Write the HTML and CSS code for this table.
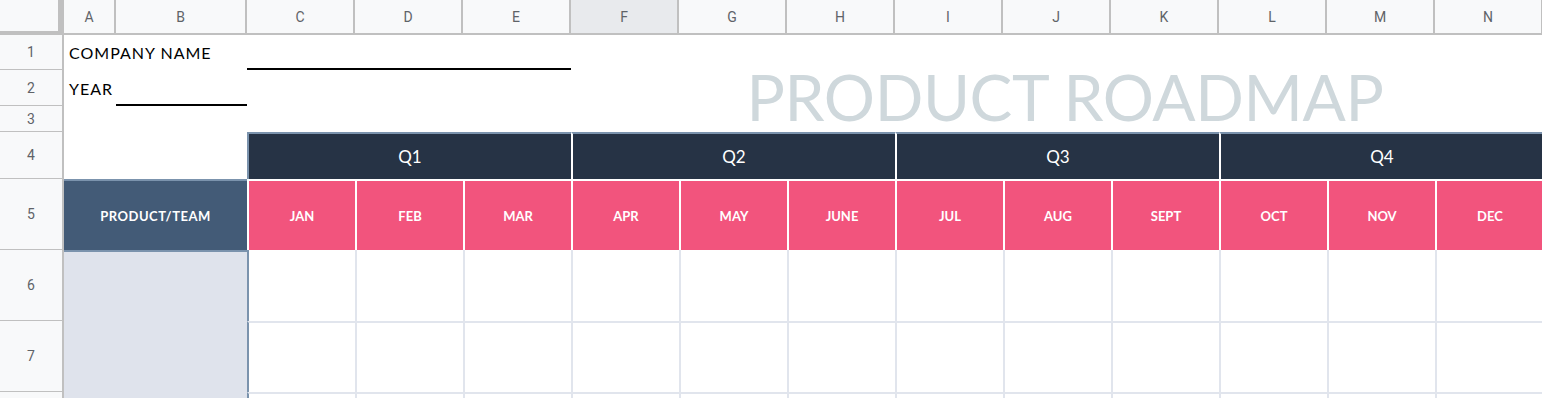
FILE: index.html
```html
<!DOCTYPE html>
<html lang="en">
<head>
    <meta charset="UTF-8">
    <meta name="viewport" content="width=device-width, initial-scale=1.0">
    <title>Product Roadmap</title>
    <link rel="stylesheet" href="styles.css">
</head>
<body>
    <div class="sheet">
        <!-- Column letters -->
        <div class="row">
            <div class="corner"></div>
            <div class="col-head">A</div>
            <div class="col-head">B</div>
            <div class="col-head">C</div>
            <div class="col-head">D</div>
            <div class="col-head">E</div>
            <div class="col-head active">F</div>
            <div class="col-head">G</div>
            <div class="col-head">H</div>
            <div class="col-head">I</div>
            <div class="col-head">J</div>
            <div class="col-head">K</div>
            <div class="col-head">L</div>
            <div class="col-head">M</div>
            <div class="col-head">N</div>
        </div>

        <!-- Company info -->
        <div class="row">
            <div class="row-head">1</div>
            <div class="cell label span-2">COMPANY NAME</div>
            <div class="cell underline span-3"></div>
        </div>
        <div class="row">
            <div class="row-head">2</div>
            <div class="cell label">YEAR</div>
            <div class="cell underline"></div>
            <div class="cell span-3"></div>
        </div>
        <div class="row">
            <div class="row-head">3</div>
            <div class="cell span-5"></div>
        </div>

        <div class="title">PRODUCT ROADMAP</div>

        <!-- Quarters -->
        <div class="row">
            <div class="row-head">4</div>
            <div class="cell span-2"></div>
            <div class="quarter first span-3">Q1</div>
            <div class="quarter span-3">Q2</div>
            <div class="quarter span-3">Q3</div>
            <div class="quarter span-3">Q4</div>
        </div>

        <!-- Months -->
        <div class="row">
            <div class="row-head">5</div>
            <div class="team-head span-2">PRODUCT/TEAM</div>
            <div class="month">JAN</div>
            <div class="month">FEB</div>
            <div class="month">MAR</div>
            <div class="month">APR</div>
            <div class="month">MAY</div>
            <div class="month">JUNE</div>
            <div class="month">JUL</div>
            <div class="month">AUG</div>
            <div class="month">SEPT</div>
            <div class="month">OCT</div>
            <div class="month">NOV</div>
            <div class="month">DEC</div>
        </div>

        <!-- Roadmap rows -->
        <div class="row first-body">
            <div class="row-head">6</div>
            <div class="team span-2"></div>
            <div class="slot start"></div>
            <div class="slot"></div><div class="slot"></div><div class="slot"></div>
            <div class="slot"></div><div class="slot"></div><div class="slot"></div>
            <div class="slot"></div><div class="slot"></div><div class="slot"></div>
            <div class="slot"></div><div class="slot"></div>
        </div>
        <div class="row">
            <div class="row-head">7</div>
            <div class="team span-2"></div>
            <div class="slot start"></div>
            <div class="slot"></div><div class="slot"></div><div class="slot"></div>
            <div class="slot"></div><div class="slot"></div><div class="slot"></div>
            <div class="slot"></div><div class="slot"></div><div class="slot"></div>
            <div class="slot"></div><div class="slot"></div>
        </div>
        <div class="row">
            <div class="row-head"></div>
            <div class="team span-2"></div>
            <div class="slot start"></div>
            <div class="slot"></div><div class="slot"></div><div class="slot"></div>
            <div class="slot"></div><div class="slot"></div><div class="slot"></div>
            <div class="slot"></div><div class="slot"></div><div class="slot"></div>
            <div class="slot"></div><div class="slot"></div>
        </div>
    </div>
</body>
</html>
```

FILE: styles.css
```css
/* Reset */
* {
    margin: 0;
    padding: 0;
    box-sizing: border-box;
}

body {
    font-family: 'Lato', 'Noto Sans', sans-serif;
    background-color: #fff;
    color: #000;
    overflow: hidden;
}

/* Sheet grid: row numbers, A, B, then twelve month columns */
.sheet {
    display: grid;
    grid-template-columns: 64px 52px 131px repeat(12, 108px);
    grid-template-rows: 35px 35px 36px 26px 47px 71px 71px 71px 71px;
}

.row {
    display: contents;
}

.span-2 { grid-column: span 2; }
.span-3 { grid-column: span 3; }
.span-5 { grid-column: span 5; }

/* Spreadsheet headers */
.corner {
    background-color: #f8f9fa;
    border-right: 6px solid #c0c0c0;
    border-bottom: 4px solid #c0c0c0;
}

.col-head,
.row-head {
    display: flex;
    justify-content: center;
    align-items: center;
    background-color: #f8f9fa;
    font-family: 'Roboto', 'Liberation Sans', sans-serif;
    font-size: 14px;
    color: #5f6368;
}

.col-head {
    border-right: 2px solid #c0c0c0;
    border-bottom: 2px solid #c0c0c0;
}

.col-head.active {
    background-color: #e8eaed;
}

.row-head {
    border-right: 2px solid #c0c0c0;
    border-bottom: 1px solid #c0c0c0;
}

/* Company info */
.cell {
    display: flex;
    align-items: center;
}

.label {
    padding-left: 5px;
    font-size: 16px;
    letter-spacing: 1px;
}

.underline {
    border-bottom: 2px solid #000;
}

.title {
    grid-column: 7 / 16;
    grid-row: 2 / 5;
    align-self: end;
    padding-bottom: 3px;
    padding-left: 16px;
    text-align: center;
    font-size: 64px;
    line-height: 64px;
    letter-spacing: -0.4px;
    color: #cfd8dc;
    white-space: nowrap;
}

/* Quarters and months */
.quarter {
    display: flex;
    justify-content: center;
    align-items: center;
    background-color: #263345;
    border-top: 2px solid #7b93ad;
    border-left: 2px solid #fff;
    color: #fff;
    font-size: 17px;
}

.quarter.first {
    border-left-color: #7b93ad;
}

.team-head,
.month {
    display: flex;
    justify-content: center;
    align-items: center;
    color: #fff;
    font-size: 13px;
    font-weight: 700;
}

.team-head {
    background-color: #435b77;
    border-top: 2px solid #7b93ad;
    letter-spacing: 0.5px;
}

.month {
    background-color: #f2547d;
    border-top: 2px solid #fff;
    border-left: 2px solid #fff;
}

/* Roadmap body */
.team {
    background-color: #dfe3ec;
}

.first-body .team {
    border-top: 2px solid #7b93ad;
}

.slot {
    border-top: 2px solid #e1e5ed;
    border-left: 2px solid #e1e5ed;
}

.first-body .slot {
    border-top: none;
}

.slot.start {
    border-left-color: #7b93ad;
}
```
